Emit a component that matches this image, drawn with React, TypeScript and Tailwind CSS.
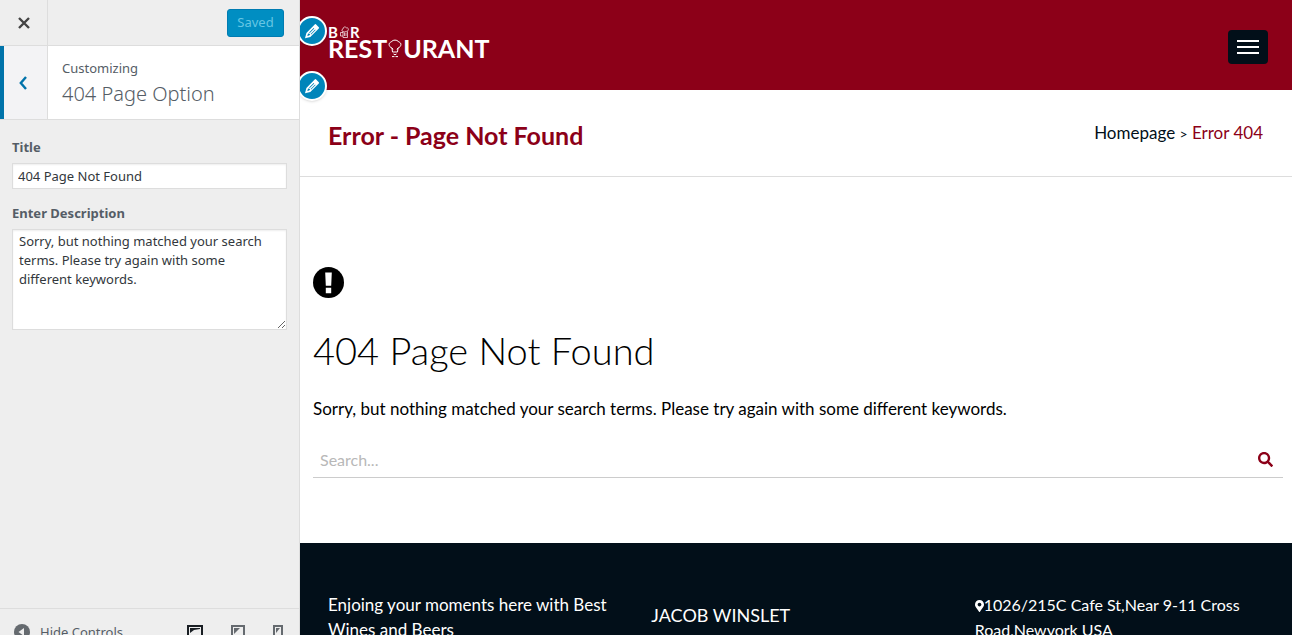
import React, { useState } from 'react';
import { FaMapMarkerAlt, FaSearch } from 'react-icons/fa';

const PencilIcon = () => (
  <svg viewBox="0 0 20 20" className="w-5 h-5" fill="currentColor" aria-hidden="true">
    <path
      fillRule="evenodd"
      d="M13.9 3.3 16.8 6.2a.9.9 0 0 1 0 1.2L8.3 15.9 3 17.3 4.4 11.9 12.7 3.4a.9.9 0 0 1 1.2-.1zM6.800 12.300 5.800 13.300 5.300 15.100 7.100 14.500 8.200 13.500zM11.600 6.900 7.100 11.400l.7.7L12.300 7.600zM13.100 8.400 8.600 12.900l.5.5L13.600 8.900z"
    />
  </svg>
);

const ExclamationIcon = () => (
  <svg viewBox="0 0 31 31" className="w-[31px] h-[31px]" aria-hidden="true">
    <circle cx="15.5" cy="15.5" r="15.500" fill="#000" />
    <path d="M12.200 5.500h6.600l-.6 13.200h-5.400zM12.800 20.800h5.400v5.400h-5.400z" fill="#fff" />
  </svg>
);

const Logo = () => (
  <a href="#" aria-label="Bar Restaurant" className="block text-white">
    <span className="flex items-center gap-px h-3 text-[15px] leading-3 font-bold">
      B
      <svg viewBox="0 0 10 12" className="w-2.5 h-3" fill="none" stroke="currentColor" strokeWidth="0.7">
        <path d="M4 5.500v6h4.500v-6M4 6.500H1.500v3.500H4M5.500 6.500V10M7 6.500V10M4 5.500C2.500 5.500 2.500 3.200 4 3 4 .8 6.500.3 7.200 1.800 9 1.300 10 3 9 4.300c0 1.200-1.500 1.500-2 .7C6.500 6 5 6.200 4 5.500z" />
      </svg>
      R
    </span>
    <span className="flex items-center h-5 text-[25px] leading-5 font-bold">
      REST
      <svg viewBox="0 0 16 20" className="w-4 h-5" fill="none" stroke="currentColor" strokeWidth="1">
        <path d="M5.500 14 5 10C1.500 9 1 4.500 4.300 4 5.500 1.500 10.500 1.500 11.700 4 15 4.500 14.500 9 11 10L10.500 14M5.500 14h5M6.500 16l1.500.8 1.500-.8M5 18.600h2.500M8.500 18.600H11M5 10l1 1.500M11 10l-1 1.500" />
      </svg>
      URANT
    </span>
  </a>
);

const EditShortcut = ({ label }: { label: string }) => (
  <button
    type="button"
    aria-label={label}
    className="flex items-center justify-center w-[30px] h-[30px] rounded-full border-2 border-white bg-[#0085ba] text-white shadow-sm"
  >
    <PencilIcon />
  </button>
);

const Sidebar = () => {
  const [title, setTitle] = useState('404 Page Not Found');
  const [description, setDescription] = useState(
    'Sorry, but nothing matched your search terms. Please try again with some different keywords.'
  );

  return (
    <aside className="flex flex-col w-[300px] shrink-0 bg-[#eee] border-r border-[#ddd] text-[#555d66] font-['Noto_Sans',sans-serif]">
      <div className="flex items-center justify-between h-[46px] shrink-0 pr-[15px] border-b border-[#ddd]">
        <button type="button" aria-label="Close" className="flex items-center justify-center w-12 h-full border-r border-[#ddd] text-[#444]">
          <svg viewBox="0 0 12 12" className="w-3 h-3" stroke="currentColor" strokeWidth="2.4">
            <path d="M1 1 11 11M11 1 1 11" />
          </svg>
        </button>
        <button type="button" className="h-7 w-[57px] rounded-[3px] border border-[#007cb2] bg-[#008ec2] text-[13px] text-[#66c6e4]">
          Saved
        </button>
      </div>

      <div className="flex h-[74px] shrink-0 bg-white border-b border-[#ddd]">
        <button type="button" aria-label="Back" className="flex items-center justify-center w-12 pr-1.5 border-l-4 border-l-[#0073aa] border-r border-r-[#ddd] bg-[#f3f3f5] text-[#0073aa]">
          <svg viewBox="0 0 8 14" className="w-2 h-3.5" fill="none" stroke="currentColor" strokeWidth="2.4">
            <path d="M7 1 1.800 7 7 13" />
          </svg>
        </button>
        <div className="pl-[14px] pt-3">
          <p className="text-[13px] leading-5">Customizing</p>
          <h2 className="text-xl leading-8 font-light">404 Page Option</h2>
        </div>
      </div>

      <div className="flex flex-col flex-1 px-3 pt-[15px]">
        <label htmlFor="title" className="text-[13px] leading-6 font-bold">Title</label>
        <input
          id="title"
          type="text"
          value={title}
          onChange={(e) => setTitle(e.target.value)}
          className="h-[26px] mt-1 px-[5px] border border-[#ddd] bg-white text-[13px] text-[#32373c] shadow-[inset_0_1px_2px_rgba(0,0,0,0.07)]"
        />
        <label htmlFor="description" className="mt-3 text-[13px] leading-6 font-bold">Enter Description</label>
        <textarea
          id="description"
          value={description}
          onChange={(e) => setDescription(e.target.value)}
          className="h-[101px] mt-1 px-[6px] py-[2px] border border-[#ddd] bg-white text-[13px] leading-[19px] text-[#32373c] shadow-[inset_0_1px_2px_rgba(0,0,0,0.07)]"
        />
      </div>

      <div className="flex items-start justify-between h-[27px] shrink-0 pl-[14px] pr-4 pt-[14px] border-t border-[#ddd] overflow-hidden">
        <button type="button" className="flex items-center gap-[10px] text-[13px] leading-[18px]">
          <svg viewBox="0 0 16 16" className="w-4 h-4">
            <circle cx="8" cy="8" r="8" fill="#656a6f" />
            <path d="M10 4v8L4.500 8z" fill="#eee" />
          </svg>
          Hide Controls
        </button>
        <div className="flex gap-7 pt-[2px] text-[#656a6f]">
          <button type="button" aria-label="Desktop preview" className="text-[#191e23]">
            <svg viewBox="0 0 16 16" className="w-4 h-4" fill="none" stroke="currentColor" strokeWidth="2">
              <path d="M1 1h14v10H1z" />
              <path d="M3 3h10v1L7 5 3 8z" fill="currentColor" stroke="none" />
            </svg>
          </button>
          <button type="button" aria-label="Tablet preview">
            <svg viewBox="0 0 14 16" className="w-3.5 h-4" fill="none" stroke="currentColor" strokeWidth="2">
              <path d="M1 1h12v14H1z" />
              <path d="M3 3h6L3 9z" fill="currentColor" stroke="none" />
            </svg>
          </button>
          <button type="button" aria-label="Mobile preview">
            <svg viewBox="0 0 10 16" className="w-2.5 h-4" fill="none" stroke="currentColor" strokeWidth="2">
              <path d="M1 1h8v14H1z" />
              <path d="M3 3h4L3 8z" fill="currentColor" stroke="none" />
            </svg>
          </button>
        </div>
      </div>
    </aside>
  );
};

const Preview = () => (
  <div className="relative flex flex-col flex-1 min-w-0 overflow-hidden bg-white text-black font-[Lato,sans-serif]">
    {/* Edit shortcuts float over the header and are clipped by the preview edge */}
    <div className="absolute top-4 -left-[3px] flex flex-col gap-[25px]">
      <EditShortcut label="Edit logo" />
      <EditShortcut label="Edit menu" />
    </div>

    <header className="flex items-start justify-between h-[90px] shrink-0 pl-7 pr-6 bg-[#8c0018]">
      <div className="pt-[26px]">
        <Logo />
      </div>
      <button type="button" aria-label="Menu" className="flex flex-col items-center justify-center gap-1 w-10 h-[34px] mt-[30px] rounded bg-[#020f19]">
        <span className="w-[22px] h-0.5 bg-white" />
        <span className="w-[22px] h-0.5 bg-white" />
        <span className="w-[22px] h-0.5 bg-white" />
      </button>
    </header>

    <div className="flex items-start justify-between h-[87px] shrink-0 pl-7 pr-[29px] pt-7 border-b border-[#ddd]">
      <h1 className="text-[25px] leading-[34px] font-bold text-[#8c0018]">Error - Page Not Found</h1>
      <nav className="text-[17px] leading-[30px] text-[#020f19]">
        <a href="#">Homepage</a> <span className="text-sm">&gt;</span>{' '}
        <a href="#" className="text-[#8c0018]">Error 404</a>
      </nav>
    </div>

    <main className="flex flex-col h-[366px] shrink-0 pl-[13px] pr-[9px] pt-[90px]">
      <ExclamationIcon />
      <h2 className="mt-[26px] text-[38px] leading-[52px] font-light">404 Page Not Found</h2>
      <p className="mt-[21px] text-[17px] leading-6">
        Sorry, but nothing matched your search terms. Please try again with some different keywords.
      </p>
      <form className="flex items-center h-9 mt-[21px] pr-[10px] border-b border-[#ccc]" onSubmit={(e) => e.preventDefault()}>
        <input
          type="search"
          aria-label="Search"
          placeholder="Search..."
          className="flex-1 px-[7px] bg-transparent text-base placeholder:text-[#b8b8b8] outline-none"
        />
        <button type="submit" aria-label="Submit search" className="text-[#8c0018]">
          <FaSearch className="w-[15px] h-[15px]" />
        </button>
      </form>
    </main>

    <footer className="grid grid-cols-3 gap-[30px] flex-1 min-h-0 pl-7 pr-6 pt-[49px] bg-[#020f19] text-white text-base leading-[25px] overflow-hidden">
      <p className="text-[17px] leading-[25px]">Enjoing your moments here with Best Wines and Beers</p>
      <h3 className="pt-[11px] text-lg leading-[25px]">JACOB WINSLET</h3>
      <p>
        <FaMapMarkerAlt className="inline-block w-[9px] h-[14px] align-[-2px]" />
        1026/215C Cafe St,Near 9-11 Cross Road,Newyork USA
      </p>
    </footer>
  </div>
);

const App: React.FC = () => {
  return (
    <div className="flex h-screen overflow-hidden">
      <Sidebar />
      <Preview />
    </div>
  );
};

export default App;
